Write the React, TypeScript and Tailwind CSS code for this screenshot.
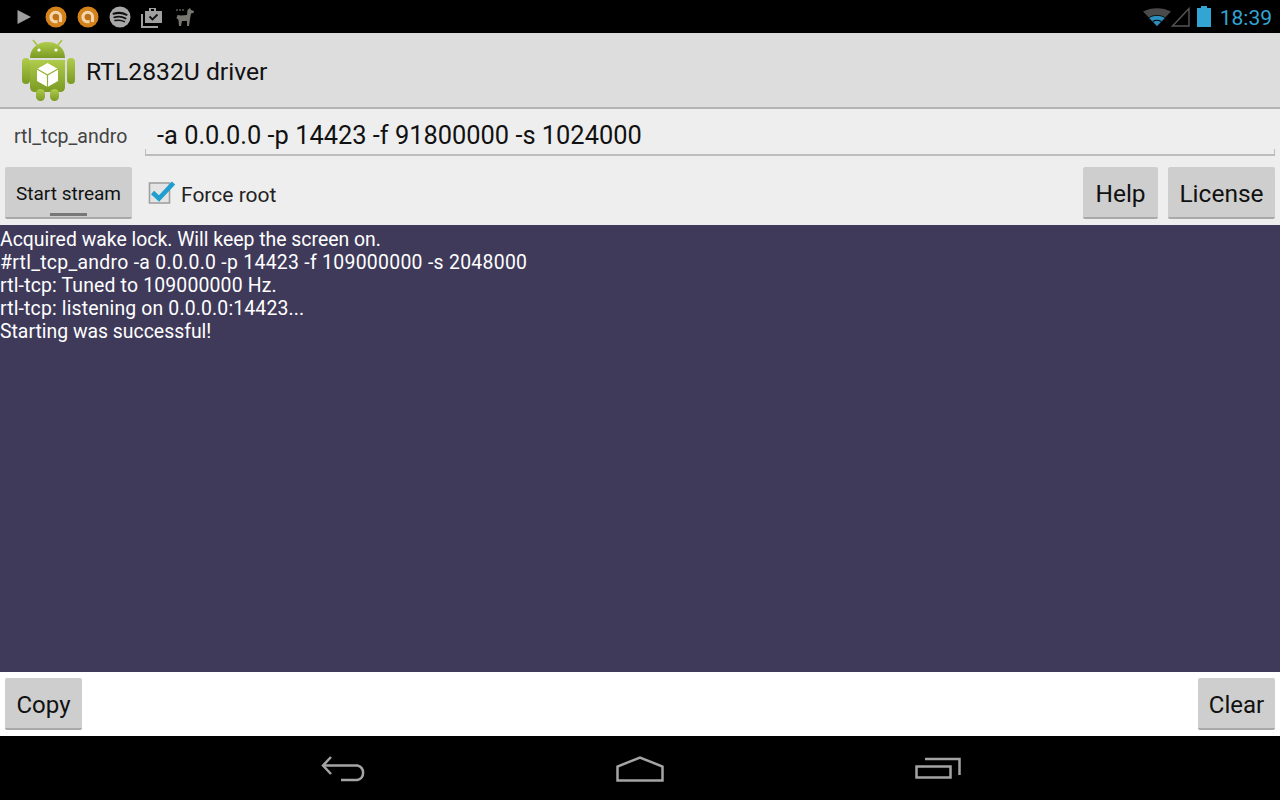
import React from 'react'

const FONT = "font-['Roboto',sans-serif]"

function PlayIcon() {
  return (
    <svg width="16" height="16" viewBox="0 0 16 16">
      <path d="M1.5 1 L15 8 L1.5 15 Z" fill="#a0a0a0" />
    </svg>
  )
}

function AudioIcon() {
  return (
    <svg width="22" height="22" viewBox="0 0 22 22">
      <circle cx="11" cy="11" r="10.5" fill="#d4831c" />
      <path d="M15.5 16 V11 A4.8 4.8 0 1 0 11 15.8 H12.5" fill="none" stroke="#f2d7ae" strokeWidth="3" />
      <circle cx="11" cy="11" r="3" fill="#c0701a" />
    </svg>
  )
}

function SpotifyIcon() {
  return (
    <svg width="22" height="22" viewBox="0 0 22 22">
      <circle cx="11" cy="11" r="10.5" fill="#a8a8a8" />
      <path d="M4.5 7.8 C9 6.4 14 6.8 17.6 8.8" stroke="#111" strokeWidth="2" fill="none" strokeLinecap="round" />
      <path d="M5.3 11.3 C9 10.3 13.4 10.6 16.6 12.5" stroke="#111" strokeWidth="1.8" fill="none" strokeLinecap="round" />
      <path d="M6 14.6 C9 13.9 12.6 14.1 15.4 15.7" stroke="#111" strokeWidth="1.5" fill="none" strokeLinecap="round" />
    </svg>
  )
}

function BriefcaseIcon() {
  return (
    <svg width="22" height="22" viewBox="0 0 22 22">
      <path d="M1 8 V21 H17" stroke="#a0a0a0" strokeWidth="2" fill="none" />
      <path d="M4 5 H8 V2 H15 V5 H21 V17 H4 Z" fill="#a0a0a0" />
      <rect x="10" y="3" width="3" height="2" fill="#000" />
      <path d="M8.5 10.5 L11.5 13.5 L16.5 8.5" stroke="#111" strokeWidth="1.8" fill="none" />
    </svg>
  )
}

function LlamaIcon() {
  return (
    <svg width="20" height="20" viewBox="0 0 20 20">
      <path d="M15 1 L16 3 L19 4 L18.5 6 L16 6.5 L15 12 L14 19 L12 19 L12 14 L7 14 L6 19 L4 19 L3.5 13 L1.5 11 L2.5 8 L6 8.5 L12 8 L12.5 3 Z" fill="#77776f" />
      <path d="M1 3 H10" stroke="#85857d" strokeWidth="1" strokeDasharray="2 1" />
    </svg>
  )
}

function WifiIcon() {
  return (
    <svg width="28" height="18" viewBox="0 0 28 18">
      <path d="M0 3.5 C8 -1 20 -1 28 3.5 L14 18 Z" fill="#4a4a4a" />
      <path d="M6 9.7 C10.5 6.6 17.5 6.6 22 9.7 L14 18 Z" fill="#2a8fbd" />
      <path d="M6 9.7 C10.5 6.6 17.5 6.6 22 9.7" stroke="#000" strokeWidth="0.8" fill="none" />
      <path d="M9.8 13.6 C12.3 12 15.7 12 18.2 13.6" stroke="#000" strokeWidth="1.2" fill="none" />
    </svg>
  )
}

function SignalIcon() {
  return (
    <svg width="19" height="20" viewBox="0 0 19 20">
      <path d="M1.5 19 L18 1.5 V19 Z" fill="none" stroke="#555" strokeWidth="1.4" />
    </svg>
  )
}

function BatteryIcon() {
  return (
    <svg width="14" height="21" viewBox="0 0 14 21">
      <path d="M4 0 H10 V2 H14 V21 H0 V2 H4 Z" fill="#33a5d3" />
    </svg>
  )
}

function AppIcon() {
  return (
    <svg width="56" height="64" viewBox="0 0 56 64">
      <defs>
        <linearGradient id="droid" x1="0" y1="0" x2="0" y2="1">
          <stop offset="0" stopColor="#b0cc4c" />
          <stop offset="1" stopColor="#7a9a22" />
        </linearGradient>
      </defs>
      <path d="M17 6 L13 1 M38 6 L42 1" stroke="#a4c33c" strokeWidth="1.6" />
      <path d="M10 19 C10 9 18 3 27.5 3 C37 3 45 9 45 19 Z" fill="url(#droid)" />
      <circle cx="19" cy="11" r="1.6" fill="#fff" />
      <circle cx="36" cy="11" r="1.6" fill="#fff" />
      <path d="M10 21 H45 V48 Q45 53 40 53 H15 Q10 53 10 48 Z" fill="url(#droid)" />
      <rect x="2" y="19" width="8" height="26" rx="4" fill="url(#droid)" />
      <rect x="47" y="19" width="8" height="26" rx="4" fill="url(#droid)" />
      <rect x="16" y="50" width="9" height="12" rx="4.5" fill="url(#droid)" />
      <rect x="30" y="50" width="9" height="12" rx="4.5" fill="url(#droid)" />
      <path d="M27.5 24 L38 30 V42 L27.5 48 L17 42 V30 Z" fill="#fff" />
      <path d="M17 30 L27.5 36 L38 30 M27.5 36 V48" stroke="#93b232" strokeWidth="1.2" fill="none" />
    </svg>
  )
}

function CheckIcon() {
  return (
    <svg width="28" height="26" viewBox="0 0 28 26">
      <rect x="1.5" y="3" width="20" height="20" fill="#e4e4e4" stroke="#a0a0a0" strokeWidth="1.6" />
      <path d="M4.5 12.5 L11 18.5 L25.5 3" stroke="#1e9fd0" strokeWidth="4.6" fill="none" />
    </svg>
  )
}

function BackIcon() {
  return (
    <svg width="46" height="26" viewBox="0 0 46 26">
      <path d="M10 1 L2 9.5 L10 18" stroke="#a4a4a4" strokeWidth="2.5" fill="none" />
      <path d="M2 9.5 H36.5 A7.5 7.5 0 0 1 36.5 24 H20" stroke="#a4a4a4" strokeWidth="2.5" fill="none" />
    </svg>
  )
}

function HomeIcon() {
  return (
    <svg width="48" height="26" viewBox="0 0 48 26">
      <path d="M1.5 24.5 V10.5 L24 1.5 L46.5 10.5 V24.5 Z" stroke="#a4a4a4" strokeWidth="2.5" fill="none" />
    </svg>
  )
}

function RecentsIcon() {
  return (
    <svg width="46" height="22" viewBox="0 0 46 22">
      <rect x="1.5" y="9.5" width="34" height="11" stroke="#a4a4a4" strokeWidth="2.5" fill="none" />
      <path d="M10 2 H44.5 V18" stroke="#a4a4a4" strokeWidth="2.5" fill="none" />
    </svg>
  )
}

function HoloButton({ label, className }: { label: string; className: string }) {
  return (
    <div className={`flex h-[52px] items-center justify-center rounded-[2px] border-b-2 border-[#a9a9a9] bg-[#cecece] text-[#111] ${className}`}>
      {label}
    </div>
  )
}

// letter spacing per line: the digits in the screenshot's font run wider than its letters
const LOG_LINES = [
  { text: 'Acquired wake lock. Will keep the screen on.', tracking: 'tracking-normal' },
  { text: '#rtl_tcp_andro -a 0.0.0.0 -p 14423 -f 109000000 -s 2048000', tracking: 'tracking-[0.29px]' },
  { text: 'rtl-tcp: Tuned to 109000000 Hz.', tracking: 'tracking-[0.17px]' },
  { text: 'rtl-tcp: listening on 0.0.0.0:14423...', tracking: 'tracking-[0.16px]' },
  { text: 'Starting was successful!', tracking: 'tracking-normal' },
]

export default function App() {
  return (
    <div className={`flex h-[800px] w-[1280px] flex-col overflow-hidden bg-black ${FONT}`}>
      <div className="flex h-[33px] shrink-0 items-center justify-between bg-black pl-[16px] pr-[8px]">
        <div className="flex items-center">
          <div className="mr-[13px]"><PlayIcon /></div>
          <div className="mr-[10px]"><AudioIcon /></div>
          <div className="mr-[10px]"><AudioIcon /></div>
          <div className="mr-[10px]"><SpotifyIcon /></div>
          <div className="mr-[10px]"><BriefcaseIcon /></div>
          <div className="ml-[2px]"><LlamaIcon /></div>
        </div>
        <div className="flex items-center">
          <WifiIcon />
          <SignalIcon />
          <div className="ml-[7px] mr-[9px]"><BatteryIcon /></div>
          <span className="mt-[3px] text-[21px] leading-none text-[#33a5d3]">18:39</span>
        </div>
      </div>

      <div className="flex h-[74px] shrink-0 items-center bg-[#dddddd] pl-[20px]">
        <div className="mt-[2px]"><AppIcon /></div>
        <span className="ml-[10px] mt-[4px] text-[24.7px] leading-none text-[#111]">RTL2832U driver</span>
      </div>
      <div className="h-[2px] shrink-0 bg-[#b4b4b4]" />

      <div className="flex h-[116px] shrink-0 flex-col bg-[#eeeeee]">
        <div className="flex h-[58px] shrink-0 pl-[14px] pr-[5px]">
          <span className="mt-[17px] w-[131px] shrink-0 text-[19.5px] leading-[22px] text-[#444]">rtl_tcp_andro</span>
          <div className="relative h-[47px] flex-1 border-b-2 border-[#bdbdbd] pl-[12px] pt-[12px] text-[25.4px] leading-[28px] text-[#111]">
            -a 0.0.0.0 -p 14423 -f 91800000 -s 1024000
            <div className="absolute bottom-0 left-0 h-[5px] w-[1px] bg-[#bdbdbd]" />
            <div className="absolute bottom-0 right-0 h-[5px] w-[1px] bg-[#bdbdbd]" />
          </div>
        </div>
        <div className="flex pl-[5px] pr-[5px]">
          <div className="relative">
            <HoloButton label="Start stream" className="w-[127px] pt-[4px] text-[19px]" />
            <div className="absolute bottom-[3px] left-[45px] h-[3px] w-[37px] bg-[#777]" />
          </div>
          <div className="ml-[16px] flex h-[52px] items-center">
            <CheckIcon />
            <span className="ml-[5px] mt-[5px] text-[21px] leading-none text-[#222]">Force root</span>
          </div>
          <div className="flex-1" />
          <HoloButton label="Help" className="w-[75px] pt-[4px] text-[24.5px]" />
          <HoloButton label="License" className="ml-[10px] w-[107px] pt-[4px] text-[24.5px]" />
        </div>
      </div>

      <div className="h-[447px] shrink-0 bg-[#3f3a5a] pt-[3px] text-[19.4px] leading-[23px] text-white">
        {LOG_LINES.map((line) => (
          <div key={line.text} className={line.tracking}>{line.text}</div>
        ))}
      </div>

      <div className="flex h-[64px] shrink-0 items-center justify-between bg-white px-[5px]">
        <HoloButton label="Copy" className="w-[77px] pt-[4px] text-[24px]" />
        <HoloButton label="Clear" className="w-[77px] pt-[4px] text-[24px]" />
      </div>

      <div className="relative flex h-[64px] shrink-0 items-center bg-black pl-[321px]">
        <div className="mt-[2px]"><BackIcon /></div>
        <div className="ml-[249px] mt-[2px]"><HomeIcon /></div>
        <div className="ml-[251px]"><RecentsIcon /></div>
      </div>
    </div>
  )
}
